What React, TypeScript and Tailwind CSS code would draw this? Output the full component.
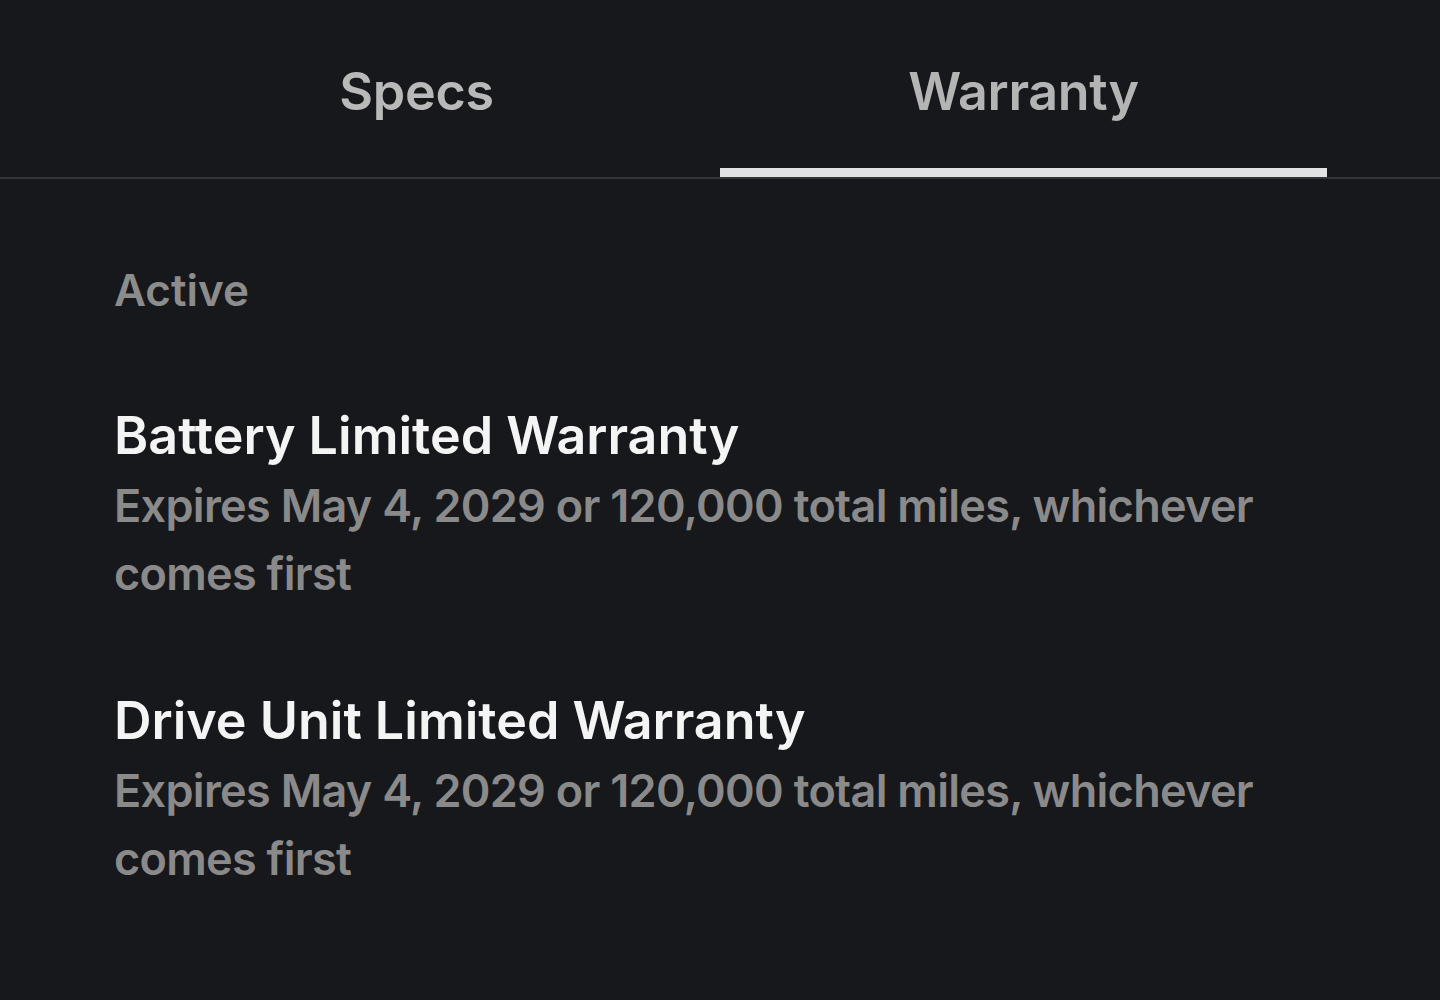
export default function App() {
  return (
    <div className="min-h-[1000px] w-[1440px] bg-[#17181b]" style={{ fontFamily: "Inter, 'Liberation Sans', sans-serif" }}>
      <div className="border-b-2 border-[#333437]">
        <div className="mx-[113px] flex">
          <div className="flex h-[177px] flex-1 items-center justify-center pt-[6px] text-[52px] font-semibold tracking-[-0.3px] text-[#b9b9ba]">
            Specs
          </div>
          <div className="relative flex h-[177px] flex-1 items-center justify-center pt-[6px] text-[52px] font-semibold tracking-[-0.3px] text-[#b4b4b5]">
            Warranty
            <div className="absolute bottom-0 left-0 right-0 h-[9px] bg-[#e2e2e2]" />
          </div>
        </div>
      </div>
      <div className="px-[114px] pt-[81px]">
        <div className="h-[60px] text-[44px] leading-[60px] font-semibold text-[#8c8c8d]">Active</div>
        <div className="mt-[80px] flex flex-col gap-[77px]">
          {["Battery Limited Warranty", "Drive Unit Limited Warranty"].map((t) => (
            <div key={t}>
              <div className="text-[52px] leading-[72px] font-semibold text-[#f4f4f4]">{t}</div>
              <div className="text-[45px] leading-[68px] font-semibold tracking-[-0.7px] text-[#8a8a8b]">
                Expires May 4, 2029 or 120,000 total miles, whichever comes first
              </div>
            </div>
          ))}
        </div>
      </div>
    </div>
  );
}
